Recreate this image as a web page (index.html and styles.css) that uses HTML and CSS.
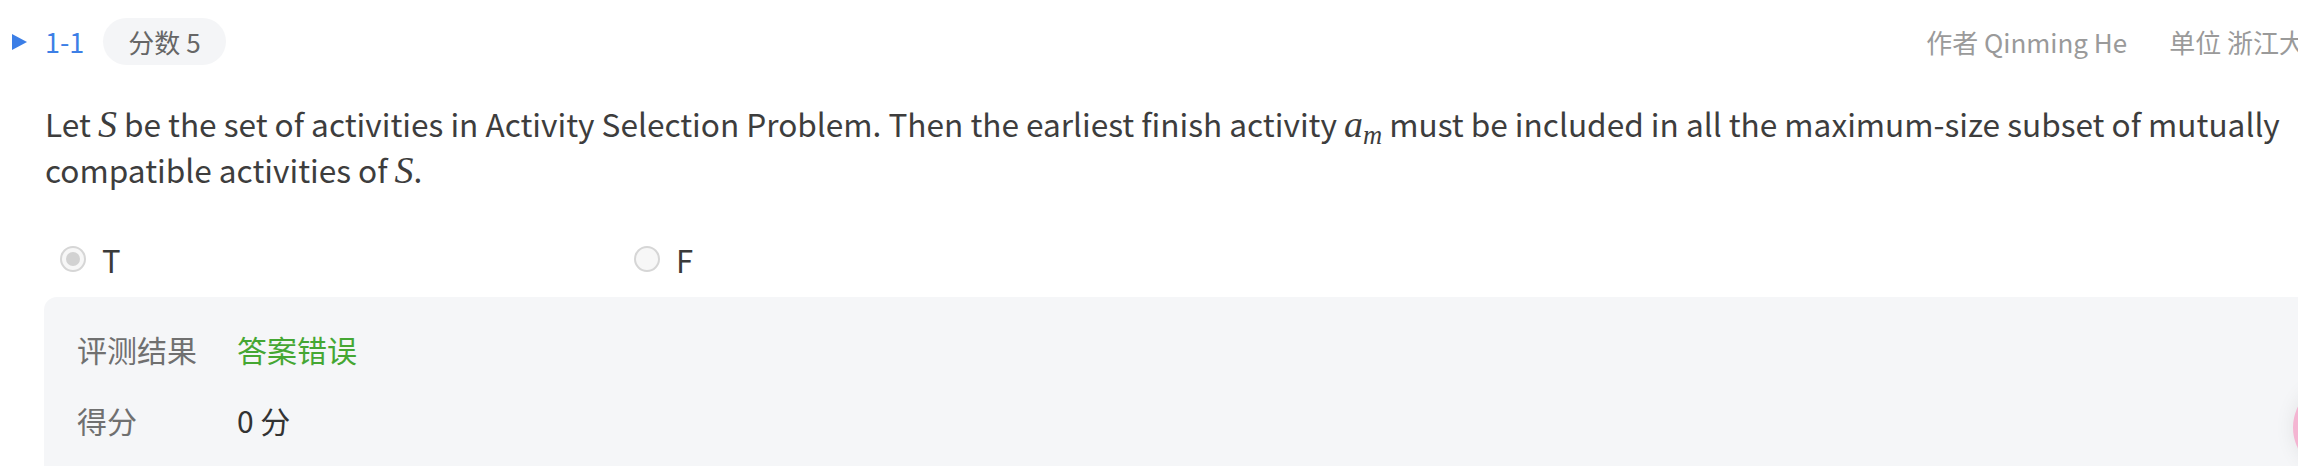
FILE: index.html
```html
<!DOCTYPE html>
<html lang="zh">
<head>
<meta charset="utf-8">
<title>1-1</title>
<link rel="stylesheet" href="styles.css">
</head>
<body>
<div class="page">
  <div class="head">
    <span class="tri"></span>
    <span class="num">1-1</span>
    <span class="pill">分数 5</span>
    <div class="meta">
      <span>作者 Qinming He</span>
      <span>单位 浙江大学</span>
    </div>
  </div>
  <p class="stem">Let <span class="m">S</span> be the set of activities in Activity Selection Problem. Then the earliest finish activity <span class="m">a<sub>m</sub></span> must be included in all the maximum-size subset of mutually compatible activities of <span class="m">S</span>.</p>
  <div class="options">
    <label class="opt"><span class="radio checked"></span><span class="opt-text">T</span></label>
    <label class="opt"><span class="radio"></span><span class="opt-text">F</span></label>
  </div>
  <div class="result">
    <div class="row"><span class="label">评测结果</span><span class="val wrong">答案错误</span></div>
    <div class="row"><span class="label">得分</span><span class="val">0 分</span></div>
  </div>
  <div class="fab"></div>
</div>
</body>
</html>
```

FILE: styles.css
```css
html, body {
  margin: 0;
  padding: 0;
  background: #ffffff;
  overflow: hidden;
}
body {
  font-family: "Noto Sans CJK SC", sans-serif;
  color: #3a3a3a;
}
.page {
  width: 2360px;
  position: relative;
  height: 466px;
}
.head {
  display: flex;
  align-items: center;
  height: 47px;
  margin-top: 18px;
  padding-left: 12px;
  padding-right: 29px;
  font-size: 26px;
}
.tri {
  width: 0;
  height: 0;
  border-left: 15px solid #3b7ee6;
  border-top: 8.5px solid transparent;
  border-bottom: 8.5px solid transparent;
  margin-right: 18px;
}
.num {
  color: #3d7fe6;
  font-size: 27px;
}
.pill {
  margin-left: 19px;
  height: 47px;
  line-height: 47px;
  padding: 0 25px;
  border-radius: 24px;
  background: #f4f5f7;
  color: #666666;
}
.meta {
  margin-left: auto;
  display: flex;
  gap: 42px;
  color: #9a9a9a;
}
.stem {
  margin: 35px 0 0 45px;
  width: 2260px;
  font-size: 31.6px;
  line-height: 46px;
  color: #3d3d3d;
}
.m {
  font-family: "Liberation Serif", serif;
  font-style: italic;
  font-size: 1.2em;
  line-height: 1;
}
.m sub {
  font-size: 0.7em;
  vertical-align: -0.25em;
  line-height: 0;
}
.options {
  display: flex;
  margin: 0 0 0 45px;
  padding-top: 47px;
}
.opt {
  width: 574px;
  display: flex;
  align-items: center;
  padding-left: 15px;
  box-sizing: border-box;
  font-size: 31px;
  height: 40px;
}
.radio {
  width: 26px;
  height: 26px;
  box-sizing: border-box;
  border: 2px solid #d6d6d6;
  border-radius: 50%;
  background: #f7f7f7;
  margin-right: 16px;
  display: flex;
  align-items: center;
  justify-content: center;
}
.radio.checked::after {
  content: "";
  width: 14px;
  height: 14px;
  border-radius: 50%;
  background: #d2d2d2;
}
.opt-text {
  color: #3a3a3a;
}
.result {
  margin: 18px 0 0 44px;
  background: #f5f6f8;
  border-radius: 13px 0 0 0;
  padding: 16px 0 30px 33px;
  font-size: 30px;
}
.row {
  display: flex;
  align-items: center;
  height: 71px;
}
.label {
  width: 160px;
  color: #707070;
}
.val {
  color: #333333;
}
.val.wrong {
  color: #45a733;
}
.fab {
  position: absolute;
  left: 2293px;
  top: 363px;
  width: 93px;
  height: 93px;
  border-radius: 50%;
  background: #f4b5d2;
  box-shadow: 0 0 20px rgba(0, 0, 0, 0.08);
}
```
